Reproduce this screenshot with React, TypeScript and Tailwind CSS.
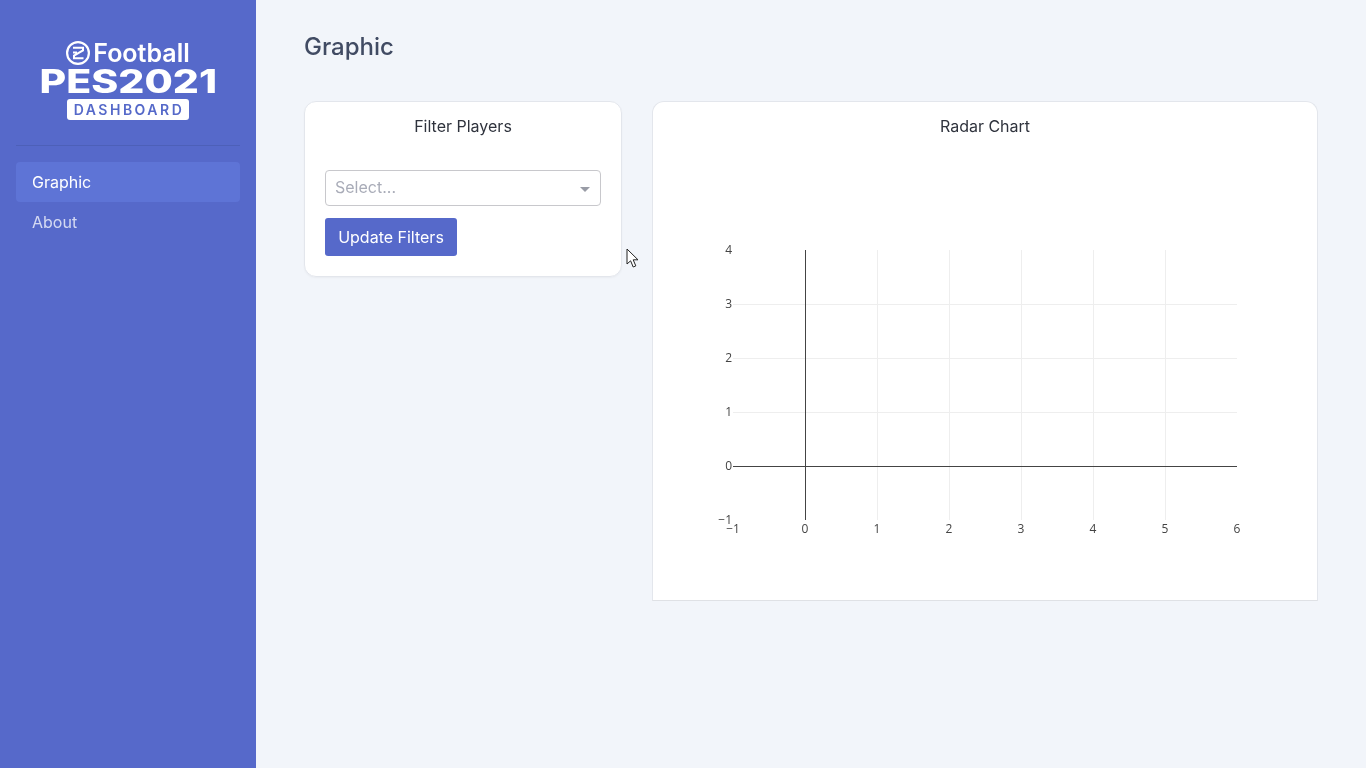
import React from "react";

const xs = [-1, 0, 1, 2, 3, 4, 5, 6];
const ys = [4, 3, 2, 1, 0, -1];
const X = (v: number) => 152.5 + v * 72;
const Y = (v: number) => 315 - v * 54;
const label = (v: number) => (v < 0 ? "\u2212" + Math.abs(v) : String(v));

function Chart() {
  return (
    <svg width="664" height="449" viewBox="0 0 664 449" className="block" style={{ fontFamily: '"Open Sans", sans-serif' }}>
      {xs.filter((v) => v > 0 && v < 6).map((v) => (
        <line key={v} x1={X(v)} x2={X(v)} y1={99} y2={369} stroke="#eeeeee" />
      ))}
      {ys.filter((v) => v > 0 && v < 4).map((v) => (
        <line key={v} x1={80} x2={584} y1={Y(v) + 0.5} y2={Y(v) + 0.5} stroke="#eeeeee" />
      ))}
      <line x1={X(0)} x2={X(0)} y1={99} y2={369} stroke="#444444" />
      <line x1={80} x2={584} y1={Y(0) + 0.5} y2={Y(0) + 0.5} stroke="#444444" />
      {xs.map((v) => (
        <text key={v} x={X(v) - 0.5} y={382} textAnchor="middle" fontSize="12" fill="#444444">{label(v)}</text>
      ))}
      {ys.map((v) => (
        <text key={v} x={79} y={Y(v) + 4} textAnchor="end" fontSize="12" fill="#444444">{label(v)}</text>
      ))}
    </svg>
  );
}

function Logo() {
  return (
    <div className="flex flex-col items-center h-[79px] will-change-transform">
      <div className="flex items-center h-6 gap-[3px]">
        <svg width="24" height="24" viewBox="0 0 24 24" fill="none" stroke="#ffffff">
          <circle cx="12" cy="12" r="10.9" strokeWidth="2.2" />
          <path d="M7 6.8H17V9.4L8 14.6V17.2H17.5M7 11.5H11" strokeWidth="2" />
        </svg>
        <span className="text-[25px] leading-6 font-semibold text-white">Football</span>
      </div>
      <div className="h-[29px] w-[176px] mt-[2px] flex items-center justify-center">
        <span className="text-[32px] leading-[29px] font-extrabold text-white inline-block scale-x-[1.28] whitespace-nowrap">PES2021</span>
      </div>
      <div className="mt-[3px] w-[122px] h-[21px] pl-[2px] pt-[1px] bg-white rounded-[3px] flex items-center justify-center text-[14px] leading-none font-semibold tracking-[2.5px] text-[#5569c9]">
        DASHBOARD
      </div>
    </div>
  );
}

export default function App() {
  return (
    <div className="relative flex h-[768px] w-full overflow-hidden bg-[#f2f5fa]" style={{ fontFamily: 'Inter, "Liberation Sans", sans-serif' }}>
      <aside className="w-64 shrink-0 bg-[#5669ca] px-4 pt-[41px]">
        <Logo />
        <div className="mt-[25px] h-px bg-[#4d60b8]" />
        <nav className="mt-4 flex flex-col will-change-transform">
          <a className="h-10 rounded bg-[#5e74d6] px-4 flex items-center text-base text-white">Graphic</a>
          <a className="h-10 px-4 flex items-center text-base text-white/75">About</a>
        </nav>
      </aside>
      <main className="flex-1 px-12 will-change-transform">
        <h1 className="mt-[31px] h-8 text-2xl leading-8 font-medium text-[#414b63]">Graphic</h1>
        <div className="mt-[38px] flex items-start gap-[30px]">
          <section className="w-[318px] h-[176px] rounded-xl border border-[#e3e6ec] bg-white shadow-[0_1px_2px_rgba(0,0,0,0.04)] px-5">
            <h2 className="mt-[14px] h-5 text-base leading-5 text-center text-[#2f333d]">Filter Players</h2>
            <div className="mt-[34px] h-9 w-[276px] rounded border border-[#c8c8cc] flex items-center justify-between pb-[2px] pl-[9px] pr-[9px]">
              <span className="text-base text-[#a9acb8]">Select...</span>
              <span className="w-0 h-0 border-x-[5px] border-x-transparent border-t-[5px] border-t-[#999ca6] mt-[5px] mr-[1px]" />
            </div>
            <button className="mt-3 h-[38px] w-[132px] rounded-[3px] bg-[#5669ca] text-base text-white">Update Filters</button>
          </section>
          <section className="w-[666px] rounded-t-xl border border-[#e3e6ec] border-b-[#dfe1e5] bg-white">
            <h2 className="pt-[14px] h-[49px] text-base leading-5 text-center text-[#2f333d]">Radar Chart</h2>
            <Chart />
          </section>
        </div>
      </main>
      <svg className="absolute left-[626px] top-[248px]" width="14" height="21" viewBox="0 0 14 21">
        <path d="M1 1V16L4.6 12.8L7.2 19L9.8 17.9L7.2 11.8H12Z" fill="#ffffff" stroke="#222222" strokeWidth="1" />
      </svg>
    </div>
  );
}
